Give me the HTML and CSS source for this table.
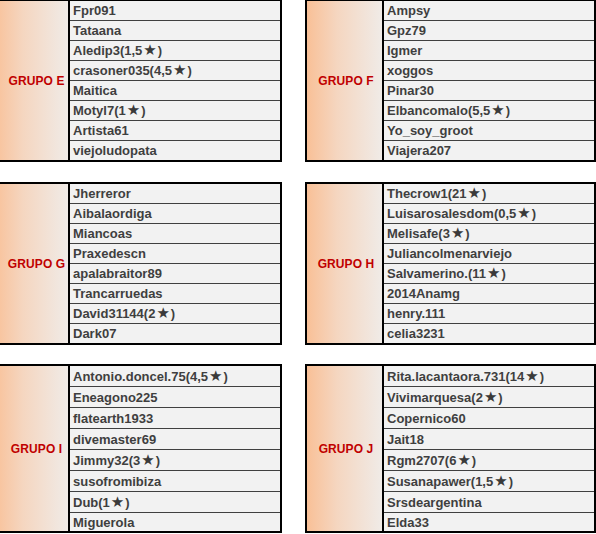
FILE: index.html
```html
<!DOCTYPE html>
<html lang="es">
<head>
<meta charset="utf-8">
<title>Grupos</title>
<link rel="stylesheet" href="styles.css">
</head>
<body>
<div class="board">
  <section class="panel panel-cut">
    <div class="label">GRUPO E</div>
    <div class="rows">
      <div class="row">Fpr091</div>
      <div class="row">Tataana</div>
      <div class="row">Aledip3(1,5<span class="star">★</span>)</div>
      <div class="row">crasoner035(4,5<span class="star">★</span>)</div>
      <div class="row">Maitica</div>
      <div class="row">Motyl7(1<span class="star">★</span>)</div>
      <div class="row">Artista61</div>
      <div class="row">viejoludopata</div>
    </div>
  </section>
  <section class="panel">
    <div class="label">GRUPO F</div>
    <div class="rows">
      <div class="row">Ampsy</div>
      <div class="row">Gpz79</div>
      <div class="row">Igmer</div>
      <div class="row">xoggos</div>
      <div class="row">Pinar30</div>
      <div class="row">Elbancomalo(5,5<span class="star">★</span>)</div>
      <div class="row">Yo_soy_groot</div>
      <div class="row">Viajera207</div>
    </div>
  </section>
  <section class="panel panel-cut">
    <div class="label">GRUPO G</div>
    <div class="rows">
      <div class="row">Jherreror</div>
      <div class="row">Aibalaordiga</div>
      <div class="row">Miancoas</div>
      <div class="row">Praxedescn</div>
      <div class="row">apalabraitor89</div>
      <div class="row">Trancarruedas</div>
      <div class="row">David31144(2<span class="star">★</span>)</div>
      <div class="row">Dark07</div>
    </div>
  </section>
  <section class="panel">
    <div class="label">GRUPO H</div>
    <div class="rows">
      <div class="row">Thecrow1(21<span class="star">★</span>)</div>
      <div class="row">Luisarosalesdom(0,5<span class="star">★</span>)</div>
      <div class="row">Melisafe(3<span class="star">★</span>)</div>
      <div class="row">Juliancolmenarviejo</div>
      <div class="row">Salvamerino.(11<span class="star">★</span>)</div>
      <div class="row">2014Anamg</div>
      <div class="row">henry.111</div>
      <div class="row">celia3231</div>
    </div>
  </section>
  <section class="panel panel-tall panel-cut">
    <div class="label">GRUPO I</div>
    <div class="rows">
      <div class="row">Antonio.doncel.75(4,5<span class="star">★</span>)</div>
      <div class="row">Eneagono225</div>
      <div class="row">flatearth1933</div>
      <div class="row">divemaster69</div>
      <div class="row">Jimmy32(3<span class="star">★</span>)</div>
      <div class="row">susofromibiza</div>
      <div class="row">Dub(1<span class="star">★</span>)</div>
      <div class="row">Miguerola</div>
    </div>
  </section>
  <section class="panel panel-tall">
    <div class="label">GRUPO J</div>
    <div class="rows">
      <div class="row">Rita.lacantaora.731(14<span class="star">★</span>)</div>
      <div class="row">Vivimarquesa(2<span class="star">★</span>)</div>
      <div class="row">Copernico60</div>
      <div class="row">Jait18</div>
      <div class="row">Rgm2707(6<span class="star">★</span>)</div>
      <div class="row">Susanapawer(1,5<span class="star">★</span>)</div>
      <div class="row">Srsdeargentina</div>
      <div class="row">Elda33</div>
    </div>
  </section>
</div>
</body>
</html>
```

FILE: styles.css
```css
html, body {
  margin: 0;
  padding: 0;
  background: #ffffff;
}

body {
  font-family: "Liberation Sans", Arial, sans-serif;
  overflow: hidden;
}

.board {
  display: grid;
  grid-template-columns: 291px 291px;
  column-gap: 23px;
  row-gap: 20px;
  margin-left: -9px;
  margin-top: -1px;
  width: 605px;
}

.board .panel:nth-child(n+5) {
  margin-top: -1px;
}

.panel {
  display: grid;
  grid-template-columns: 77px 1fr;
  border: 2px solid #000;
  background: #f2f2f2;
}

.label {
  display: flex;
  align-items: center;
  justify-content: center;
  border-right: 2px solid #000;
  background: linear-gradient(to right, #f9c097 0%, #f5d6c0 40%, #f0ebe7 100%);
  color: #c00000;
  font-weight: bold;
  font-size: 12px;
  letter-spacing: 0.1px;
  padding-left: 3px;
}

.panel-cut .label {
  padding-left: 12px;
}

.rows {
  display: flex;
  flex-direction: column;
}

.row {
  height: 19px;
  line-height: 19px;
  padding-left: 3px;
  font-size: 13px;
  font-weight: bold;
  color: #3f3f3f;
  white-space: nowrap;
}

.row + .row {
  border-top: 1px solid #404040;
}

.panel-tall .row {
  height: 20px;
  line-height: 21px;
}

.panel-tall .row:last-child {
  height: 18px;
  line-height: 19px;
}

.star {
  font-family: "DejaVu Sans", sans-serif;
  font-size: 15px;
  color: #3a3a3a;
  margin: 0 1px;
}
```
